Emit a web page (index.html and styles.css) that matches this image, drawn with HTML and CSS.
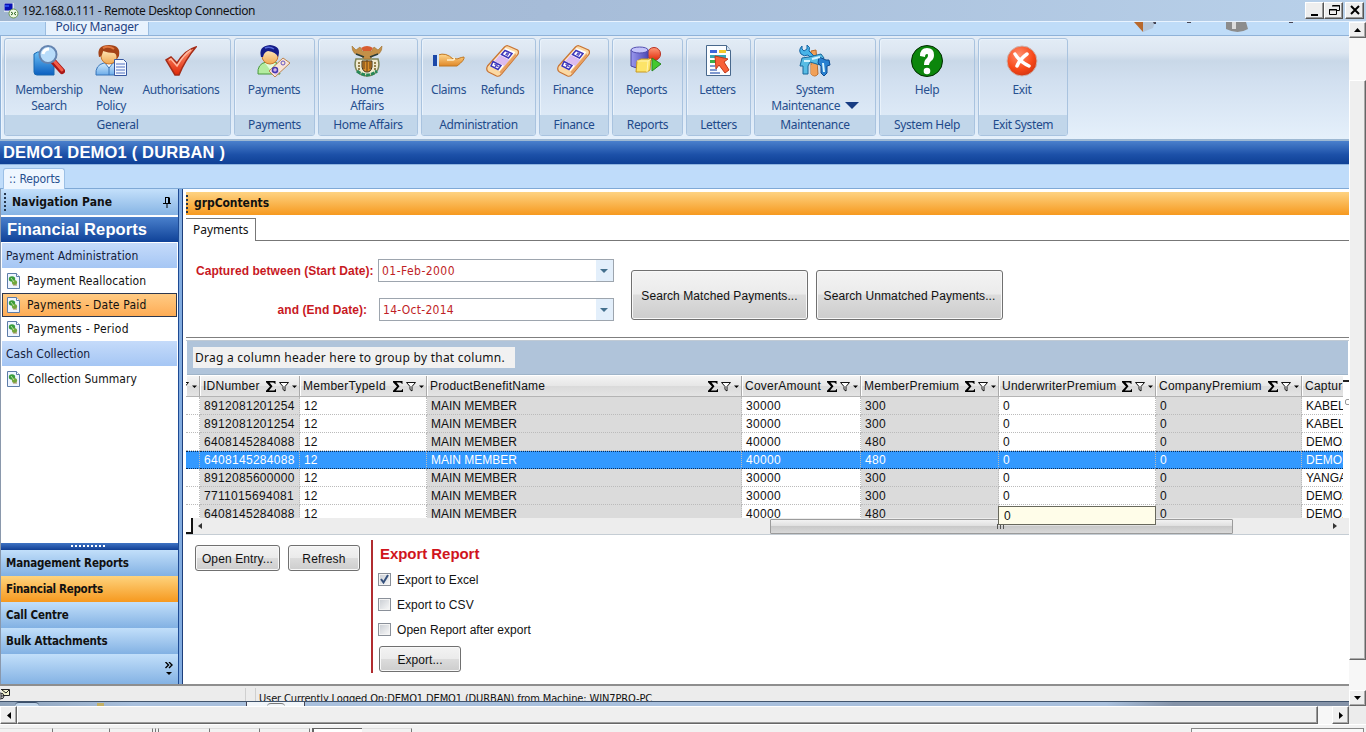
FILE: index.html
```html
<!DOCTYPE html>
<html lang="en">
<head>
<meta charset="utf-8">
<title>192.168.0.111 - Remote Desktop Connection</title>
<link rel="stylesheet" href="styles.css">
</head>
<body>
<svg class="defs" width="0" height="0">
  <defs>
    <linearGradient id="gBlue" x1="0" y1="0" x2="0" y2="1"><stop offset="0" stop-color="#6cc0f5"/><stop offset="1" stop-color="#0a5fc0"/></linearGradient>
    <linearGradient id="gRed" x1="0" y1="0" x2="0" y2="1"><stop offset="0" stop-color="#ff9a78"/><stop offset="1" stop-color="#e02808"/></linearGradient>
    <linearGradient id="gSkin" x1="0" y1="0" x2="0" y2="1"><stop offset="0" stop-color="#fff0c8"/><stop offset="1" stop-color="#f0a850"/></linearGradient>
    <linearGradient id="gShirt" x1="0" y1="0" x2="0" y2="1"><stop offset="0" stop-color="#d4ecfc"/><stop offset="1" stop-color="#6cacea"/></linearGradient>
    <linearGradient id="gHand" x1="0" y1="0" x2="0" y2="1"><stop offset="0" stop-color="#ffd890"/><stop offset="1" stop-color="#e08828"/></linearGradient>
    <linearGradient id="gDb" x1="0" y1="0" x2="1" y2="0"><stop offset="0" stop-color="#9a98ee"/><stop offset="1" stop-color="#4c48b4"/></linearGradient>
    <radialGradient id="gExit" cx=".4" cy=".3" r=".8"><stop offset="0" stop-color="#ff9070"/><stop offset=".6" stop-color="#f84818"/><stop offset="1" stop-color="#c83010"/></radialGradient>
    <g id="sum"><path d="M0 0h9.500v3H9Q8.500 1.500 7 1.500H3.500L6.500 5.300 3 9.500h4.500Q9 9.500 9.500 8H10v3H0V9.700L4 5.500 0 1.200z" fill="#000"/></g>
    <g id="fun"><path d="M.5.500h9L6 4.500V9L4 7.500v-3z" fill="#fff" stroke="#111"/></g>
    <symbol id="tools" viewBox="0 0 31 11"><use href="#sum"/><use href="#fun" x="13" y="1"/><path d="M26 4.500h5L28.500 7z"/></symbol>
    <symbol id="cash" viewBox="0 0 32 32">
      <path d="M1 21 18 2q2-2 4-1l9 4q2 2 0 5L15 29q-2 3-5 2L2 27q-3-2-1-6z" fill="#fbd9a4" stroke="#c87434" stroke-width="1.200"/>
      <path d="M3 21 19 3l10 4-16 19z" fill="#fff"/><path d="M8 16l5-6 10 5-5 6z" fill="#dcbcf0"/>
      <path d="M18.500 5.500l7 3-3.500 4.500-7-3.500zM6.500 16.500l8 4-3 4-7-3.500z" fill="none" stroke="#3c34b8" stroke-width="1.500"/>
      <path d="M20.500 8l-1 1.500 1.500.7 1-1.500zM8 19l4 3M11.500 18.500l-3 3.500" fill="none" stroke="#5048c4" stroke-width="1.200"/>
      <path d="M13 27 29 8.500l1 2.500-15.500 18z" fill="#e8a060"/>
    </symbol>
    <symbol id="doc" viewBox="0 0 13 16"><path d="M.5.500h9l3 3v12H.5z" fill="#eef5ff" stroke="#5c7ca8"/><path d="M9.500.500v3h3" fill="#fff" stroke="#5c7ca8"/><ellipse cx="5" cy="6" rx="3.200" ry="2.700" fill="#3a9c3c"/><ellipse cx="7.500" cy="9.500" rx="2.600" ry="2.500" fill="#72a83c"/><path d="M4 5l3 4" stroke="#b8e0a0"/><path d="M6 12h4" stroke="#a08850"/></symbol>
  </defs>
</svg>

<header class="titlebar">
  <svg class="rdp" width="16" height="17" viewBox="0 0 16 17"><path d="M1 1h10v9H1z" fill="#d8e0ea"/><path d="M1.500 1.500h8v7h-8z" fill="#0810b4"/><path d="M2 3h4v2H2z" fill="#2848e8"/><circle cx="10.500" cy="11.500" r="4.500" fill="#eef8e4" stroke="#6c9850"/><path d="M8 10l2 1.500L8 13M13 10l-2 1.500L13 13" fill="none" stroke="#286018"/></svg>
  <span class="title-text">192.168.0.111 - Remote Desktop Connection</span>
  <div class="win-buttons">
    <span class="wb"><svg width="16" height="14"><path d="M4 11h7v2H4z"/></svg></span>
    <span class="wb"><svg width="16" height="14"><path d="M6.500 2.500h7v5h-3M6 3h8M3.500 6.500h7v5h-7zM3 7h8" fill="none" stroke="#000"/></svg></span>
    <span class="wb close"><svg width="16" height="14"><path d="M4 3l8 8M12 3l-8 8" stroke="#000" stroke-width="2"/></svg></span>
  </div>
</header>

<div class="view">
  <main class="remote">
    <div class="ribbon-tabs">
      <div class="ribbon-tab"><span>Policy Manager</span></div>
      <svg class="strip-icons" width="170" height="12" viewBox="0 0 170 12"><path d="M0 0h14l-5 10z" fill="#b8682c"/><path d="M9 0h12l-2 6-10 4z" fill="#b4c6da"/><path d="M19 0h3v2h-2zM53 0h4v1h-4zM155 0h4v1h-4z" fill="#445"/><path d="M92 0h20l2 7q-10 6-22 0z" fill="#8c8c8c"/><path d="M98 0h4v7h-4z" fill="#ddd"/></svg>
    </div>

    <div class="ribbon">
      <section class="group g1"><div class="tools-row">
        <div class="tool t-ms"><svg width="32" height="32" viewBox="0 0 32 32"><path d="M1 9q3-3 8-2l12 8v15H4q-3 0-3-3z" fill="url(#gBlue)" stroke="#1868b0"/><path d="M20 16l9 10" stroke="#a81818" stroke-width="6" stroke-linecap="round"/><path d="M21 16l8 9" stroke="#f45c48" stroke-width="3" stroke-linecap="round"/><circle cx="15" cy="9.500" r="8.500" fill="#b8dcfa" stroke="#6484b0" stroke-width="2"/><path d="M10 9q1-5 6-5" fill="none" stroke="#fff" stroke-width="3"/></svg><span>Membership<br>Search</span></div>
        <div class="tool t-np"><svg width="32" height="32" viewBox="0 0 32 32"><path d="M1 30q-1-10 8-12h10q7 2 7 12z" fill="url(#gShirt)" stroke="#3874b8"/><path d="M10 18l4 5 4-5M14 23v7" fill="#fff" stroke="#3874b8"/><circle cx="14" cy="11" r="8" fill="url(#gSkin)" stroke="#c87830"/><path d="M4 12Q1 0 14 0q12 0 10 11l-2 3q0-5-3-6-6 0-11-2-1 6-4 6z" fill="#a44418"/><path d="M8 3q6-3 11 1" fill="none" stroke="#e07840" stroke-width="2"/><path d="M19.500 14.500h9l3 3v13h-12z" fill="#f4f8ff" stroke="#3858a0"/><path d="M21 19h9M21 22h9M21 25h9M21 28h9" stroke="#5070c0"/></svg><span>New<br>Policy</span></div>
        <div class="tool t-au"><svg width="32" height="32" viewBox="0 0 32 32"><path d="M1 15l5-3 6 6Q20 5 31 2 20 15 14 30h-4z" fill="url(#gRed)" stroke="#a42c18" stroke-width="1.500"/><path d="M4 15l2-1 6 7Q19 9 26 5" fill="none" stroke="#ffb8a0" stroke-width="1.500"/></svg><span>Authorisations</span></div>
      </div><h3>General</h3></section>

      <section class="group g2"><div class="tools-row">
        <div class="tool"><svg width="34" height="32" viewBox="0 0 34 32"><path d="M1 29q-1-10 8-12h10l4 12z" fill="#b4eca0" stroke="#48983c"/><path d="M8 18l6 8 4-8z" fill="#e4fcdc"/><circle cx="13" cy="11" r="8" fill="url(#gSkin)" stroke="#c87830"/><path d="M4 12Q1 1 13 0q12 1 8 12-2-5-10-6-4 1-5 6z" fill="#141c88"/><path d="M8 3q5-2 9 1" fill="none" stroke="#5468d8" stroke-width="1.500"/><path d="M12 26l14-13 7 5-15 14z" fill="#f8e4d8" stroke="#bc8450"/><path d="M14 26l3-3 5 4-3 3z" fill="#d0b0e8"/><circle cx="18" cy="25" r="2.500" fill="none" stroke="#4438b0" stroke-width="1.500"/><circle cx="26" cy="18" r="2" fill="none" stroke="#6454c0"/></svg><span>Payments</span></div>
      </div><h3>Payments</h3></section>

      <section class="group g3"><div class="tools-row">
        <div class="tool"><svg width="32" height="32" viewBox="0 0 32 32"><path d="M5 14Q2 24 9 29q7 4 14 0 7-5 4-15z" fill="#f0ead0" stroke="#7c8458" stroke-width="1.500"/><path d="M1 1q0 9 8 9l4 4h6l4-4q8 0 8-9l-4 4-4-3-3 5-4-4-4 4-3-5-4 3z" fill="#c49048" stroke="#a0702c" stroke-width=".6"/><path d="M10 3q6-4 12 0l-2 3h-8z" fill="#d85c30"/><path d="M5 9l8 3M27 9l-8 3" stroke="#2c3c38" stroke-width="1.500"/><path d="M11 16h10v6q-1 5-5 5t-5-5z" fill="#d88c28" stroke="#403420"/><path d="M13 17v7M16 15v11M19 17v7" stroke="#684018"/><path d="M8 17v9M24 17v9" stroke="#94804c" stroke-width="2" stroke-dasharray="2 1"/><path d="M6 26q10 8 20 0" fill="none" stroke="#288858" stroke-width="3" stroke-dasharray="4 1"/></svg><span>Home<br>Affairs</span></div>
      </div><h3>Home Affairs</h3></section>

      <section class="group g4"><div class="tools-row">
        <div class="tool t-cl"><svg width="32" height="32" viewBox="0 0 32 32"><path d="M5 10q8-3 15 4 2-1 4 0 5-2 7-2 1 3-7 9H6z" fill="url(#gHand)" stroke="#c07824"/><path d="M14 15h6q3-1 0-3" fill="none" stroke="#fff0cc" stroke-width="1.500"/><path d="M0 10h4v11H0z" fill="#1c48a8"/><path d="M4 9h2v13H4z" fill="#d8e8f8"/></svg><span>Claims</span></div>
        <div class="tool t-rf"><svg width="33" height="32"><use href="#cash"/></svg><span>Refunds</span></div>
      </div><h3>Administration</h3></section>

      <section class="group g5"><div class="tools-row">
        <div class="tool"><svg width="33" height="32"><use href="#cash"/></svg><span>Finance</span></div>
      </div><h3>Finance</h3></section>

      <section class="group g6"><div class="tools-row">
        <div class="tool"><svg width="32" height="32" viewBox="0 0 32 32"><circle cx="24" cy="9" r="6.500" fill="url(#gRed)" stroke="#b83020"/><path d="M1 5v16q8 4 17 0V5z" fill="url(#gDb)" stroke="#4844a0"/><ellipse cx="9.500" cy="5" rx="8.500" ry="3" fill="#c4c4fa" stroke="#5450b0"/><path d="M22 13l9 6-9 7z" fill="#44c830" stroke="#288820"/><path d="M7 16l4-2h10l-1 11-3 2H6z" fill="#fce468" stroke="#c89820"/><path d="M7 16h11l3-2M18 16l-1 11" fill="none" stroke="#fff4b0"/></svg><span>Reports</span></div>
      </div><h3>Reports</h3></section>

      <section class="group g7"><div class="tools-row">
        <div class="tool"><svg width="32" height="32" viewBox="0 0 32 32"><path d="M4.500.500h20l4 5v25h-24z" fill="#fbfdff" stroke="#48688c"/><path d="M24.500.500v5h4" fill="#d4e4f4" stroke="#48688c"/><path d="M8 5h7v3H8z" fill="#3c64dc"/><path d="M17 5h7v3h-7z" fill="#f4c828"/><path d="M8 10h16v3H8z" fill="#38a4b4"/><path d="M8 15h6v3H8z" fill="#38b048"/><path d="M8 21h5M8 25h7M8 28h10" stroke="#5878c0" stroke-width="1.500"/><path d="M13 11l13 3-4 3 5 8-4 3-6-8-3 4z" fill="#f86038" stroke="#c03818"/></svg><span>Letters</span></div>
      </div><h3>Letters</h3></section>

      <section class="group g8"><div class="tools-row">
        <div class="tool"><svg width="32" height="32" viewBox="0 0 32 32"><path d="M12 6l5-1 2 24q-3 4-7 0z" fill="#f0a058" stroke="#b86c2c"/><path d="M3 1Q-1 5 2 9q3 3 7 1l4 4h5L10 6q2-4-2-6v4L5 6 3 4z" fill="#48b4e8" stroke="#1464a4"/><path d="M10 12l12-3 3 4-4 7-10-3-2 4v8H4v-8H1l2-8z" fill="#58bce4" stroke="#18689c"/><path d="M20 12l7 3h3l1 5-3 1v7l-3 3-3-3v-7l-3-3z" fill="#2880d0" stroke="#104c90"/><path d="M5 16h6M13 14l8-2M24 18l1 9" stroke="#d4f4ff" stroke-width="2"/><path d="M12 20h6v9q-3 3-6 0z" fill="#f0a058"/></svg><span>System<br>Maintenance <i class="drop"></i></span></div>
      </div><h3>Maintenance</h3></section>

      <section class="group g9"><div class="tools-row">
        <div class="tool"><svg width="32" height="32" viewBox="0 0 32 32"><circle cx="16" cy="16" r="15.500" fill="#0c860c" stroke="#022c02"/><path d="M9 11Q9 3 16 3t7 7q0 4-3 6-2 2-2 4h-5q0-5 3-7 1-1 1-3 0-1-1-1-2 0-2 3z" fill="#fff"/><circle cx="16" cy="26" r="3.300" fill="#fff"/></svg><span>Help</span></div>
      </div><h3>System Help</h3></section>

      <section class="group g10"><div class="tools-row">
        <div class="tool"><svg width="32" height="32" viewBox="0 0 32 32"><circle cx="16" cy="16" r="15" fill="url(#gExit)" stroke="#c8b4b0"/><path d="M9 9q4 7 14 12M21 9Q14 14 11 21" fill="none" stroke="#fff" stroke-width="3.500" stroke-linecap="round"/></svg><span>Exit</span></div>
      </div><h3>Exit System</h3></section>
    </div>

    <div class="userbar">DEMO1 DEMO1 ( DURBAN )</div>
    <div class="doc-tabs"><div class="doc-tab">:: Reports</div></div>

    <div class="workspace">
      <nav class="nav">
        <div class="pane-head"><i class="grip"></i><span>Navigation Pane</span><svg width="9" height="11" viewBox="0 0 9 11"><path d="M2.500 1v6M2 .500h4.500M5.500 1v6M6.500 1v6M0 6.500h8M4 7v4" fill="none" stroke="#000"/></svg></div>
        <h2>Financial Reports</h2>
        <div class="nav-list">
          <div class="nav-cat">Payment Administration</div>
          <div class="nav-item"><svg width="13" height="16"><use href="#doc"/></svg><span>Payment Reallocation</span></div>
          <div class="nav-item on"><svg width="13" height="16"><use href="#doc"/></svg><span>Payments - Date Paid</span></div>
          <div class="nav-item"><svg width="13" height="16"><use href="#doc"/></svg><span class="w-per">Payments - Period</span></div>
          <div class="nav-cat w-col">Cash Collection</div>
          <div class="nav-item"><svg width="13" height="16"><use href="#doc"/></svg><span class="w-sum">Collection Summary</span></div>
        </div>
        <div class="nav-split"><i></i></div>
        <div class="nav-btn">Management Reports</div>
        <div class="nav-btn on">Financial Reports</div>
        <div class="nav-btn">Call Centre</div>
        <div class="nav-btn">Bulk Attachments</div>
        <div class="nav-more"><svg width="8" height="15" viewBox="0 0 8 15"><path d="M.5 0l3 3-3 3M4 0l3 3-3 3" fill="none" stroke="#000" stroke-width="1.400"/><path d="M1 10h6l-3 3z"/></svg></div>
      </nav>
      <div class="splitter"></div>

      <div class="content">
        <div class="content-head"><i class="grip"></i><span>grpContents</span></div>
        <div class="page-tabs"><div class="page-tab">Payments</div><div class="page-rest"></div></div>
        <div class="form">
          <div class="fields">
            <div class="field"><label>Captured between (Start Date):</label><div class="combo"><span>01-Feb-2000</span><i></i></div></div>
            <div class="field second"><label>and (End Date):</label><div class="combo"><span>14-Oct-2014</span><i></i></div></div>
          </div>
          <button class="btn big b1">Search Matched Payments...</button>
          <button class="btn big b2">Search Unmatched Payments...</button>
        </div>
        <div class="rule"></div>
        <div class="groupband"><span>Drag a column header here to group by that column.</span></div>

        <div class="grid">
          <div class="row head">
            <div class="c0"><svg width="31" height="11"><use href="#tools"/></svg></div>
            <div><span>IDNumber</span><svg width="31" height="11"><use href="#tools"/></svg></div>
            <div><span>MemberTypeId</span><svg width="31" height="11"><use href="#tools"/></svg></div>
            <div><span>ProductBenefitName</span><svg width="31" height="11"><use href="#tools"/></svg></div>
            <div><span>CoverAmount</span><svg width="31" height="11"><use href="#tools"/></svg></div>
            <div><span>MemberPremium</span><svg width="31" height="11"><use href="#tools"/></svg></div>
            <div><span>UnderwriterPremium</span><svg width="31" height="11"><use href="#tools"/></svg></div>
            <div><span>CompanyPremium</span><svg width="31" height="11"><use href="#tools"/></svg></div>
            <div><span>Captur</span></div>
          </div>
          <div class="row"><div></div><div>8912081201254</div><div>12</div><div>MAIN MEMBER</div><div>30000</div><div>300</div><div>0</div><div>0</div><div>KABEL</div></div>
          <div class="row"><div></div><div>8912081201254</div><div>12</div><div>MAIN MEMBER</div><div>30000</div><div>300</div><div>0</div><div>0</div><div>KABEL</div></div>
          <div class="row"><div></div><div>6408145284088</div><div>12</div><div>MAIN MEMBER</div><div>40000</div><div>480</div><div>0</div><div>0</div><div>DEMO1</div></div>
          <div class="row sel"><div></div><div>6408145284088</div><div>12</div><div>MAIN MEMBER</div><div>40000</div><div>480</div><div>0</div><div>0</div><div>DEMO1</div></div>
          <div class="row"><div></div><div>8912085600000</div><div>12</div><div>MAIN MEMBER</div><div>30000</div><div>300</div><div>0</div><div>0</div><div>YANGA</div></div>
          <div class="row"><div></div><div>7711015694081</div><div>12</div><div>MAIN MEMBER</div><div>30000</div><div>300</div><div>0</div><div>0</div><div>DEMO2</div></div>
          <div class="row"><div></div><div>6408145284088</div><div>12</div><div>MAIN MEMBER</div><div>40000</div><div>480</div><div></div><div>0</div><div>DEMO1</div></div>
          <i class="vtop"></i><i class="vthumb"></i>
        </div>
        <div class="grid-scroll">
          <i class="corner"></i><i class="arr left"></i>
          <div class="gthumb"><i></i></div>
          <i class="arr right"></i>
          <div class="tip">0</div>
        </div>

        <div class="actions">
          <button class="btn a1">Open Entry...</button>
          <button class="btn a2">Refresh</button>
          <div class="export">
            <h4>Export Report</h4>
            <div class="check"><i><svg width="11" height="11" viewBox="0 0 11 11"><path d="M2 5l2.500 3.500L9 1" fill="none" stroke="#34507c" stroke-width="2"/></svg></i><span>Export to Excel</span></div>
            <div class="check"><i></i><span>Export to CSV</span></div>
            <div class="check"><i></i><span>Open Report after export</span></div>
            <button class="btn a3">Export...</button>
          </div>
        </div>
      </div>
    </div>

    <div class="status">
      <svg width="10" height="12" viewBox="0 0 10 12"><path d="M1 1.500h8.500v6H3" fill="#f4f4d0" stroke="#222"/><path d="M2 2l4 3 3-3M0 5q4 0 4 3t-4 3M0 7h2v2H0" fill="none" stroke="#222"/></svg>
      <i class="s1"></i><i class="s2"></i><span>User Currently Logged On:DEMO1 DEMO1 (DURBAN) from Machine: WIN7PRO-PC</span>
    </div>
    <div class="taskbar"><i class="orb"></i><i class="dot"></i><i class="task"><b></b></i></div>
  </main>

  <aside class="vscroll">
    <div class="sbtn"><svg width="7" height="4"><path d="M3.500 0L7 4H0z"/></svg></div>
    <div class="vgap"></div><div class="vbar"></div><div class="vend"></div>
    <div class="sbtn"><svg width="7" height="4"><path d="M0 0h7L3.500 4z"/></svg></div>
  </aside>
</div>

<div class="hscroll">
  <div class="sbtn"><svg width="4" height="7"><path d="M4 0v7L0 3.500z"/></svg></div>
  <div class="hbar"></div><div class="hgap"></div>
  <div class="sbtn"><svg width="4" height="7"><path d="M0 0v7l4-3.500z"/></svg></div>
  <div class="hcorner"></div>
</div>
<footer class="host"><i class="k1"></i><i class="k2"></i><i class="k3"></i><i class="k4"></i><i class="k4"></i><i class="k5"></i><i class="k6"></i><i class="k6"></i><i class="k7"></i><i class="k8"></i><i class="k9"></i></footer>
</body>
</html>
```
FILE: styles.css
```css
* { box-sizing: border-box; }
body {
  margin: 0; width: 1366px; height: 732px; overflow: hidden;
  display: flex; flex-direction: column;
  font: 12px "Liberation Sans", Arial, sans-serif; color: #111; background: #f0f0f0;
}
h2, h3, h4 { margin: 0; }
svg { display: block; flex: none; }
i { flex: none; }
.defs { position: absolute; }

/* window title */
.titlebar {
  height: 22px; flex: none; display: flex; align-items: center; padding: 0 2px 1px 3px;
  background: linear-gradient(90deg, #a0b5cf, #a6bcd8 40%, #b9d1ea); border-bottom: 1px solid #e8f3ff;
}
.title-text { font: 12px "Noto Sans", "Open Sans", sans-serif; letter-spacing: -.4px; margin-left: 3px; flex: 1; white-space: nowrap; }
.win-buttons { display: flex; }
.wb {
  width: 19px; height: 17px; background: #eee; border: 1px solid; padding-left: 1px;
  border-color: #fff #555 #555 #fff; box-shadow: inset -1px -1px #999;
}
.wb.close { margin-left: 2px; }

/* remote session */
.view { height: 684px; flex: none; display: flex; }
.remote { width: 1349px; flex: none; display: flex; flex-direction: column; }
.ribbon-tabs {
  height: 14px; flex: none; display: flex; justify-content: space-between; background: #bfdcf8;
  border-bottom: 1px solid #8fb2d8; overflow: hidden;
}
.ribbon-tab {
  width: 104px; height: 14px; margin-left: 45px; background: #e8f2fd; border: solid #9cbde0; border-width: 0 1px;
  color: #1e4384; text-align: center; font: 12px/16px "Noto Sans", "Open Sans", sans-serif; white-space: nowrap;
}
.ribbon-tab span { display: block; margin-top: -3px; letter-spacing: -.25px; }
.strip-icons { margin-right: 45px; }
.ribbon {
  height: 103px; flex: none; display: flex; gap: 3px; padding: 2px 0 3px 4px;
  background: linear-gradient(#e4edf7, #dce6f1 16%, #c9d8e8 24%, #d2e0f0 45%, #e5f0fb);
  box-shadow: inset 1px 0 #8fb2d8, inset 2px 0 #eaf4fe;
}
.group {
  flex: none; height: 98px; border: 1px solid #a9c3df; border-radius: 3px; overflow: hidden;
  box-shadow: inset 1px 1px #e9f2fb; display: flex; flex-direction: column;
}
.group h3 {
  height: 20px; background: #c1d6ea; color: #1e4a8a; text-align: center;
  font: 12px/19px "Noto Sans", "Open Sans", sans-serif; white-space: nowrap; letter-spacing: -.35px;
}
.tools-row { flex: 1; display: flex; justify-content: center; padding-top: 6px; color: #27508f; }
.tool { display: flex; flex-direction: column; align-items: center; text-align: center; white-space: nowrap; font: 12px/16px "Noto Sans", "Open Sans", sans-serif; letter-spacing: -.4px; }
.tool > span { margin-top: 5px; }
.g1 { width: 227px; } .g1 .tools-row { justify-content: flex-start; padding-left: 10px; }
.g2 { width: 81px; } .g3 { width: 100px; } .g4 { width: 115px; } .g5 { width: 70px; }
.g6 { width: 71px; } .g7 { width: 65px; } .g8 { width: 122px; } .g9 { width: 96px; } .g10 { width: 90px; }
.t-ms { width: 68px; } .t-np { width: 56px; } .t-au { width: 80px; margin-left: 2px; }
.t-cl { width: 48px; } .t-rf { width: 60px; }
.g3 .tool, .g5 .tool, .g6 .tool, .g7 .tool, .g10 .tool { margin-right: 2px; }
.g2 .tool { margin-right: 1px; }
.drop { display: inline-block; border: 7px solid transparent; border-top: 7px solid #173c82; border-bottom: 0; vertical-align: 1px; margin-left: 2px; }

.userbar {
  height: 26px; flex: none; border-top: 2px solid #9db8d3; border-bottom: 1px solid #8fb4e0;
  background: linear-gradient(#4a80cc, #1c50a8 60%, #0e4095);
  color: #fff; font: bold 16.5px/23px "Liberation Sans", Arial, sans-serif; padding-left: 3px; letter-spacing: .18px;
}
.doc-tabs { height: 24px; flex: none; background: #bfdcfa; padding: 3px 0 0 3px; border-bottom: 1px solid #7fa9d6; }
.doc-tab {
  width: 62px; height: 21px; background: #eef6ff; border: 1px solid #9cc0e6; border-bottom: 0; border-radius: 3px 3px 0 0;
  font: 12px/20px "DejaVu Sans Condensed", sans-serif; color: #27508f; padding-left: 5px; white-space: nowrap; letter-spacing: -.1px;
}

/* navigation pane */
.workspace { height: 496px; flex: none; display: flex; }
.nav { width: 179px; flex: none; display: flex; flex-direction: column; background: #fff; border-left: 1px solid #8a98ac; border-right: 1px solid #1d4a94; }
.pane-head {
  height: 27px; flex: none; display: flex; align-items: center; padding: 0 6px 0 3px; margin-bottom: 1px; border-bottom: 1px solid #fff;
  background: linear-gradient(#c4e0fb, #86b4e4); font: bold 12px "DejaVu Sans Condensed", sans-serif;
}
.pane-head span { flex: 1; margin-left: 6px; white-space: nowrap; letter-spacing: .03px; }
.grip { width: 2px; height: 18px; background: repeating-linear-gradient(#26364c 0 2px, transparent 2px 4px); }
.nav h2 {
  height: 25px; flex: none; background: linear-gradient(#4a80cc, #0f4298); color: #fff;
  font: bold 16.5px/25px "Liberation Sans", Arial, sans-serif; padding-left: 6px; white-space: nowrap; letter-spacing: .1px;
}
.nav-list { height: 301px; flex: none; padding: 1px 1px 0; font: 12px "DejaVu Sans Condensed", sans-serif; white-space: nowrap; letter-spacing: .13px; }
.nav-cat { height: 25px; line-height: 26px; padding-left: 4px; background: linear-gradient(#c5dbfa, #a5c6f4); color: #14213c; }
.nav-item { height: 24px; display: flex; align-items: center; padding-left: 5px; gap: 7px; }
.nav-cat + .nav-item { height: 25px; }
.nav-item.on { border: 1px solid #2c3850; background: linear-gradient(#ffcb84, #feac55); padding-left: 4px; letter-spacing: .22px; }
.w-per { letter-spacing: .27px; }
.w-col, .w-sum { letter-spacing: .05px; }
.nav-split { height: 7px; flex: none; background: linear-gradient(#3f74c4, #123f94); padding: 2px 0 0 70px; }
.nav-split i { display: block; width: 36px; height: 2px; background: repeating-linear-gradient(100deg, #fff 0 2px, transparent 2px 4px); }
.nav-btn {
  height: 26px; flex: none; background: linear-gradient(#c2dffa, #82b1e3); padding-left: 5px;
  font: bold 11.5px/27px "DejaVu Sans Condensed", sans-serif; letter-spacing: -.15px; white-space: nowrap;
}
.nav-btn.on { background: linear-gradient(#fed37d, #f6991f); letter-spacing: -.3px; }
.nav-more { flex: 1; background: linear-gradient(#c2dffa, #82b1e3); display: flex; justify-content: flex-end; padding: 8px 5px 0 0; }
.splitter { width: 4px; flex: none; background: #82ace0; border-right: 1px solid #1d3f7c; }

/* content */
.content { width: 1166px; flex: none; background: #fff; display: flex; flex-direction: column; padding-left: 3px; }
.content-head {
  height: 23px; flex: none; margin-top: 3px; display: flex; align-items: center; background: linear-gradient(#fed382, #f6991f);
  font: bold 12px "DejaVu Sans Condensed", sans-serif;
}
.content-head span { margin: -2px 0 0 6px; letter-spacing: -.05px; }
.page-tabs { height: 23px; flex: none; margin-top: 3px; display: flex; }
.page-tab {
  width: 70px; border: solid #777; border-width: 1px 1px 0 0; padding-left: 7px;
  font: 12px/22px "Noto Sans", "Open Sans", sans-serif; letter-spacing: 0;
}
.page-rest { flex: 1; border-bottom: 1px solid #777; }
.form { height: 96px; flex: none; display: flex; padding: 18px 0 0 10px; }
.fields { width: 418px; margin-right: 17px; }
.field { display: flex; align-items: center; height: 23px; }
.field.second { margin-top: 16px; }
.field label { width: 178px; margin-right: 4px; color: #c8191f; font-weight: bold; white-space: nowrap; letter-spacing: .05px; }
.field.second label { width: 171px; margin-right: 12px; text-align: right; }
.combo { flex: 1; height: 23px; border: 1px solid #9da5ae; display: flex; justify-content: space-between; color: #c01e26; font: 12px/23px "DejaVu Sans Condensed", sans-serif; padding-left: 3px; letter-spacing: .45px; }
.second .combo span { letter-spacing: .27px; }
.combo i { width: 17px; background: #e3effb; display: flex; align-items: center; }
.combo i::before { content: ""; margin-left: 4px; border: 4px solid transparent; border-top-color: #44708e; border-bottom: 0; }
.btn {
  flex: none; font: 12px "Liberation Sans", Arial, sans-serif; color: #111; padding: 2px 0 0; white-space: nowrap;
  border: 1px solid #707070; border-radius: 3px; box-shadow: inset 0 0 0 1px #f8f8f8;
  background: linear-gradient(#f3f3f3, #ebebeb 48%, #dcdcdc 50%, #cdcdcd);
}
.big { height: 50px; margin-top: 11px; letter-spacing: .09px; }
.b1 { width: 177px; margin-right: 8px; } .b2 { width: 187px; }
.rule { height: 4px; flex: none; border-top: 1px solid #7f7f7f; border-bottom: 1px solid #c0cad4; }
.groupband { height: 34px; flex: none; margin: 0 1px; background: #b0c4da; padding: 6px 0 0 6px; border-bottom: 1px solid #9fb4c8; }
.groupband span { display: block; width: 322px; height: 21px; background: #f1f1f1; padding-left: 2px; font: 12px/21px "Noto Sans", "Open Sans", sans-serif; letter-spacing: .25px; white-space: nowrap; }

/* data grid */
.grid { height: 143px; flex: none; overflow: hidden; position: relative; padding-top: 1px; }
.row { width: 1157px; height: 18px; display: grid; grid-template-columns: 14px 100px 127px 315px 119px 138px 157px 146px 41px; }
.row > div { height: 18px; border-right: 1px dotted #bbb; border-bottom: 1px dotted #bbb; padding-left: 4px; line-height: 19px; white-space: nowrap; overflow: hidden; }
.row > div:nth-child(2) { letter-spacing: .31px; }
.row > div:nth-child(2n) { background: #dbdbdb; }
.row > div:nth-child(5), .row > div:nth-child(6) { letter-spacing: .3px; }
.row.sel > div { background: #3399ff; color: #fff; border-top: 1px dotted #0a2c58; border-bottom: 1px dotted #0a2c58; line-height: 17px; }
.row.head { height: 21px; }
.row.head > div, .row.head > div:nth-child(2n) {
  height: 21px; display: flex; align-items: center; justify-content: space-between; border: 0; border-right: 1px solid #aaa; border-bottom: 1px solid #b4b4b4;
  background: linear-gradient(#f4f4f4, #e6e6e6 50%, #dadada 52%, #e4e4e4); padding: 0 2px 0 3px; letter-spacing: .25px; box-shadow: inset 1px 0 #fff;
}
.row.head span { padding-top: 1px; }
.row.head > div.c0 { justify-content: flex-end; }
.row > div:last-child { border-right: 0; }
.vtop { position: absolute; right: 0; top: 5px; width: 6px; height: 2px; background: #222; }
.vthumb { position: absolute; right: -3px; top: 24px; width: 7px; height: 6px; border: 1px solid #999; border-radius: 2px; }
.grid-scroll { height: 17px; flex: none; background: #ededed; border-bottom: 1px solid #c5cdd4; display: flex; align-items: center; position: relative; }
.corner { width: 7px; height: 16px; border: solid #111; border-width: 0 2px 2px 0; background: #fff; margin-right: 5px; }
.arr { border: 3px solid transparent; border-left-width: 0; border-right: 4px solid #333; }
.arr.right { border-left: 4px solid #333; border-right: 0; }
.gthumb { width: 463px; height: 15px; margin: 0 100px 0 568px; border: 1px solid #9b9b9b; border-radius: 1px; background: linear-gradient(#f2f2f2, #dfdfdf 48%, #c9c9c9 50%, #d9d9d9); flex: none; padding: 4px 0 0 226px; }
.gthumb i { display: block; width: 8px; height: 5px; background: repeating-linear-gradient(90deg, #555 0 1px, transparent 1px 3px); }
.tip { position: absolute; left: 812px; top: -12px; width: 158px; height: 19px; background: #fffde9; border: 1px solid #68685c; padding-left: 5px; line-height: 18px; }

.actions { flex: 1; display: flex; padding: 5px 0 0 9px; }
.a1 { width: 85px; height: 26px; margin: 5px 8px 0 0; letter-spacing: .1px; }
.a2 { width: 72px; height: 26px; margin: 5px 11px 0 0; letter-spacing: .2px; }
.export { height: 133px; border-left: 2px solid #b02c30; padding-left: 5px; }
.export h4 { font: bold 15px/18px "Liberation Sans", Arial, sans-serif; color: #d0141c; margin: 5px 0 10px 2px; letter-spacing: -.05px; }
.check { display: flex; align-items: center; height: 13px; margin-bottom: 12px; }
.check i { width: 13px; height: 13px; margin-right: 6px; border: 1px solid #8a9099; background: linear-gradient(135deg, #c8ccd2, #fafafa); box-shadow: inset 0 0 0 1px #f4f4f4; }
.check span { letter-spacing: .05px; }
.a3 { width: 82px; height: 26px; margin: -2px 0 0 1px; display: block; letter-spacing: .05px; }

.status { height: 18px; flex: none; display: flex; background: #ececec; border-top: 2px solid #8e8e8e; border-bottom: 1px solid #41546c; overflow: hidden; padding-top: 2px; margin-top: -1px; }
.status i { width: 1px; height: 16px; background: #cfcfcf; }
.s1 { margin-left: 235px; } .s2 { margin-left: 9px; }
.status span { font: 11px/14px "DejaVu Sans Condensed", sans-serif; margin: 4px 0 0 3px; white-space: nowrap; letter-spacing: -.13px; }
.taskbar { height: 5px; flex: none; display: flex; background: linear-gradient(90deg, #8fa3ba, #a9c0dd 10%, #a9c0dd 82%, #8593a8 87%, #8593a8); }
.orb { width: 24px; height: 4px; margin-left: 15px; border-radius: 12px 12px 0 0; border-top: 1px solid #3c506c; background: #c0d4e8; }
.dot { width: 7px; height: 3px; margin: 1px 0 0 58px; background: #c4b064; }
.task { width: 59px; height: 5px; margin-left: 142px; background: #f2f6fa; border: solid #445; border-width: 0 1px; }
.task b { display: block; width: 18px; height: 4px; margin: 1px auto; border-top: 1px solid #777; border-radius: 9px 9px 0 0; }

/* outer scrollbars */
.vscroll { width: 17px; flex: none; display: flex; flex-direction: column; background: #f7f7f7; }
.sbtn { width: 17px; height: 16px; flex: none; display: flex; align-items: center; justify-content: center; background: #efefef; border: 1px solid; border-color: #fff #666 #666 #fff; box-shadow: inset -1px -1px #aaa; }
.vgap { height: 42px; flex: none; } .vend { height: 30px; flex: none; }
.vbar { height: 580px; flex: none; background: #efefef; border: 1px solid; border-color: #fff #666 #666 #fff; box-shadow: inset -1px -1px #aaa; }
.hscroll { height: 18px; flex: none; display: flex; background: #f7f7f7; }
.hscroll .sbtn { height: 18px; }
.hbar { width: 1301px; background: #efefef; border: 1px solid; border-color: #fff #666 #666 #fff; box-shadow: inset -1px -1px #999; }
.hgap { width: 14px; } .hcorner { flex: 1; background: #ececec; }
.host { flex: 1; display: flex; align-items: flex-end; background: #f2f2f2; border-top: 1px solid #fff; }
.host i { height: 4px; border: solid #777; border-width: 1px 1px 0 0; border-top-color: #ddd; }
.k1 { width: 53px; } .k2 { width: 57px; } .k3 { width: 43px; } .k4 { width: 3px; } .k5 { width: 51px; } .k6 { width: 50px; }
.k7 { width: 50px; margin-left: 2px; } .k8 { width: 50px; }
.host .k7 { border: 1px solid #666; border-width: 1px 0 0 2px; background: #fff; }
.host .k9 { width: 173px; margin-left: 779px; border: 1px solid #888; border-bottom: 0; background: #f8f8f8; }
```
